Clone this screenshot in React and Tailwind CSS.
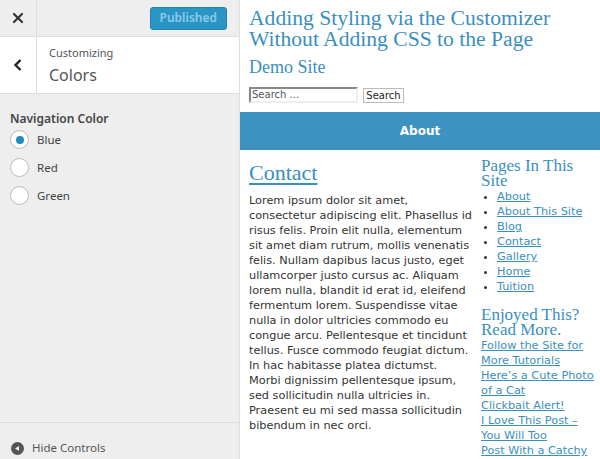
import React from 'react';

const pages = ['About', 'About This Site', 'Blog', 'Contact', 'Gallery', 'Home', 'Tuition'];
const more = ['Follow the Site for', 'More Tutorials', 'Here\u2019s a Cute Photo', 'of a Cat', 'Clickbait Alert!', 'I Love This Post \u2013', 'You Will Too', 'Post With a Catchy'];
const colors = [
  { label: 'Blue', checked: true },
  { label: 'Red', checked: false },
  { label: 'Green', checked: false },
];
const lorem = [
  'Lorem ipsum dolor sit amet,',
  'consectetur adipiscing elit. Phasellus id',
  'risus felis. Proin elit nulla, elementum',
  'sit amet diam rutrum, mollis venenatis',
  'felis. Nullam dapibus lacus justo, eget',
  'ullamcorper justo cursus ac. Aliquam',
  'lorem nulla, blandit id erat id, eleifend',
  'fermentum lorem. Suspendisse vitae',
  'nulla in dolor ultricies commodo eu',
  'congue arcu. Pellentesque et tincidunt',
  'tellus. Fusce commodo feugiat dictum.',
  'In hac habitasse platea dictumst.',
  'Morbi dignissim pellentesque ipsum,',
  'sed sollicitudin nulla ultricies in.',
  'Praesent eu mi sed massa sollicitudin',
  'bibendum in nec orci.',
];

const serif = { fontFamily: 'Georgia, "Liberation Serif", serif' };

function Sidebar() {
  return (
    <div className="flex flex-col w-[240px] h-full bg-[#eeeeee] border-r border-[#dddddd] text-[#444] font-['Noto_Sans',sans-serif] shrink-0">
      <div className="flex h-[37px] shrink-0 border-b border-[#dddddd] items-center">
        <div className="flex items-center justify-center w-[37px] h-full border-r border-[#dddddd] text-[#333]">
          <svg width="12" height="12" viewBox="0 0 12 12">
            <path d="M2 2 L10 10 M10 2 L2 10" stroke="#333" strokeWidth="2.2" strokeLinecap="round" />
          </svg>
        </div>
        <div className="flex-1 flex justify-end pr-[12px]">
          <button className="h-[23px] px-[9px] rounded-[3px] bg-[#2a95c5] border border-[#1f84b4] text-[12px] font-semibold text-[#8ccbe8]">
            Published
          </button>
        </div>
      </div>
      <div className="flex h-[57px] shrink-0 bg-white border-b border-[#dddddd]">
        <div className="flex items-center justify-center w-[37px] h-full border-r border-[#dddddd]">
          <svg width="10" height="14" viewBox="0 0 10 14">
            <path d="M7.5 2 L2.5 7 L7.5 12" stroke="#222" strokeWidth="2.4" fill="none" />
          </svg>
        </div>
        <div className="flex flex-col justify-center pl-[12px] pt-[1px]">
          <span className="text-[11px] leading-[14px] text-[#555]">Customizing</span>
          <span className="text-[16px] leading-[22px] mt-[4px] text-[#555]">Colors</span>
        </div>
      </div>
      <div className="flex flex-col px-[10px] pt-[17px] flex-1">
        <span className="text-[12px] font-semibold leading-[16px] text-[#444]">Navigation Color</span>
        <div className="flex flex-col gap-[9px] mt-[3px]">
          {colors.map((c) => (
            <div key={c.label} className="flex items-center gap-[8px]">
              <span className="flex items-center justify-center w-[19px] h-[19px] rounded-full bg-white border border-[#bbbbbb]">
                {c.checked && <span className="w-[8px] h-[8px] rounded-full bg-[#1e8cbe]" />}
              </span>
              <span className="text-[11.5px] text-[#444]">{c.label}</span>
            </div>
          ))}
        </div>
      </div>
      <div className="flex items-center h-[37px] shrink-0 border-t border-[#dddddd] pl-[11px] gap-[8px] pt-[14px]">
        <svg width="13" height="13" viewBox="0 0 13 13">
          <circle cx="6.5" cy="6.5" r="6.5" fill="#555" />
          <path d="M4 6.5 L8 4 L8 9 Z" fill="#eee" />
        </svg>
        <span className="text-[11.5px] text-[#555]">Hide Controls</span>
      </div>
    </div>
  );
}

function Preview() {
  return (
    <div className="flex flex-col flex-1 h-full bg-white overflow-hidden font-['DejaVu_Sans',Verdana,sans-serif]">
      <div className="flex flex-col shrink-0 px-[9px] pt-[8px]">
        <h1 className="text-[21.6px] leading-[21px] text-[#3a8fc0]" style={serif}>
          Adding Styling via the Customizer Without Adding CSS to the Page
        </h1>
        <div className="text-[18px] leading-[20px] mt-[7px] text-[#3a8fc0]" style={serif}>Demo Site</div>
        <div className="flex items-center gap-[5px] mt-[10px]">
          <div className="w-[109px] h-[16px] border-2 border-t-[#888] border-l-[#888] border-r-[#eee] border-b-[#eee] text-[10px] leading-[12px] text-[#555] pl-[1px]">
            Search ...
          </div>
          <button className="w-[41px] h-[15px] border border-[#bbb] bg-white text-[10px] leading-[13px] text-[#222]">Search</button>
        </div>
      </div>
      <nav className="flex items-center justify-center h-[38px] shrink-0 mt-[9px] bg-[#3d92c2]">
        <span className="text-[12px] font-bold text-white">About</span>
      </nav>
      <div className="flex px-[9px] pt-[11px] gap-[8px] shrink-0">
        <div className="flex flex-col w-[224px] shrink-0">
          <a className="text-[22px] leading-[24px] text-[#3a8fc0] underline decoration-2 underline-offset-[3px]" style={serif}>Contact</a>
          <p className="flex flex-col text-[11.3px] leading-[15px] text-[#333] mt-[8px]">
            {lorem.map((l) => (
              <span key={l} className="whitespace-nowrap">{l}</span>
            ))}
          </p>
        </div>
        <div className="flex flex-col w-[120px] shrink-0">
          <h2 className="w-[100px] text-[17px] leading-[15px] text-[#3a8fc0] mt-[-3px]" style={serif}>Pages In This Site</h2>
          <ul className="flex flex-col mt-[1px] pl-[16px] list-disc text-[#333]">
            {pages.map((p) => (
              <li key={p} className="text-[11.3px] leading-[15px]">
                <a className="text-[#3a8fc0] underline">{p}</a>
              </li>
            ))}
          </ul>
          <h2 className="w-[100px] text-[17px] leading-[15px] text-[#3a8fc0] mt-[13px]" style={serif}>Enjoyed This? Read More.</h2>
          <div className="flex flex-col mt-[1px]">
            {more.map((m) => (
              <a key={m} className="text-[11.3px] leading-[15px] text-[#3a8fc0] underline whitespace-nowrap">{m}</a>
            ))}
          </div>
        </div>
      </div>
    </div>
  );
}

export default function App() {
  return (
    <div className="flex w-[600px] h-[459px] overflow-hidden">
      <Sidebar />
      <Preview />
    </div>
  );
}
